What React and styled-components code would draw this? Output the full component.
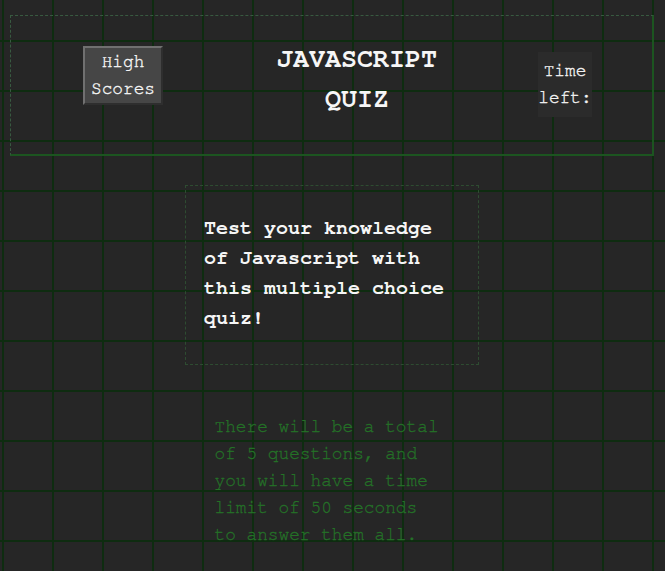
import React from "react";
import styled, { createGlobalStyle } from "styled-components";

const mono = `"Nimbus Mono PS", "Nimbus Mono L", "FreeMono", "Courier", "Courier New", "Liberation Mono", monospace`;

const GlobalStyle = createGlobalStyle`
  html {
    background-color: #262626;
    background-image:
      linear-gradient(#0e2c10 2px, transparent 2px),
      linear-gradient(90deg, #0e2c10 2px, transparent 2px);
    background-size: 50px 50px;
    background-position: 2px 40px;
  }
  body {
    margin: 0;
    font-family: ${mono};
    color: #f2f2f2;
  }
`;

const Page = styled.div`
  display: flex;
  flex-direction: column;
  align-items: center;
  padding: 15px 11px 0 10px;
`;

const Header = styled.header`
  align-self: stretch;
  box-sizing: border-box;
  height: 141px;
  display: flex;
  align-items: flex-start;
  justify-content: space-between;
  padding: 0 60px 0 72px;
  border-top: 1px dashed #385a40;
  border-left: 1px dashed #385a40;
  border-right: 2px solid #1c5520;
  border-bottom: 2px solid #1c5520;
`;

const ScoresButton = styled.button`
  margin-top: 30px;
  width: 80px;
  padding: 1px 0;
  font-family: ${mono};
  font-size: 17.8px;
  line-height: 1.5;
  color: #f6f6f6;
  -webkit-text-stroke: 0.35px #f6f6f6;
  background: #464646;
  border: 2px solid;
  border-color: #707070 #2e2e2e #2e2e2e #707070;
  cursor: pointer;
`;

const Title = styled.h1`
  margin: 23px 0 0;
  padding-left: 13px;
  width: 161px;
  font-size: 26.7px;
  line-height: 40px;
  font-weight: 700;
  text-align: center;
  color: #f6f6f6;
`;

const Timer = styled.div`
  margin-top: 36px;
  width: 54px;
  padding: 6px 0;
  font-size: 17.8px;
  line-height: 1.5;
  text-align: center;
  background: #2b2b2b;
  color: #f2f2f2;
  -webkit-text-stroke: 0.35px #f2f2f2;
`;

const Card = styled.section`
  margin-top: 29px;
  box-sizing: border-box;
  width: 294px;
  padding: 27px 18px 31px;
  border: 1px dashed #2e4c31;
`;

const Lead = styled.p`
  margin: 0;
  font-size: 20px;
  line-height: 30px;
  font-weight: 700;
  color: #f6f6f6;
`;

const Note = styled.p`
  margin: 49px 0 0;
  width: 229px;
  padding-right: 6px;
  font-size: 17.8px;
  line-height: 26.9px;
  color: #247226;
  -webkit-text-stroke: 0.3px #247226;
`;

export default function App() {
  return (
    <>
      <GlobalStyle />
      <Page>
        <Header>
          <ScoresButton>High Scores</ScoresButton>
          <Title>JAVASCRIPT QUIZ</Title>
          <Timer>Time left:</Timer>
        </Header>
        <Card>
          <Lead>Test your knowledge of Javascript with this multiple choice quiz!</Lead>
        </Card>
        <Note>
          There will be a total of 5 questions, and you will have a time limit of 50 seconds to
          answer them all.
        </Note>
      </Page>
    </>
  );
}
